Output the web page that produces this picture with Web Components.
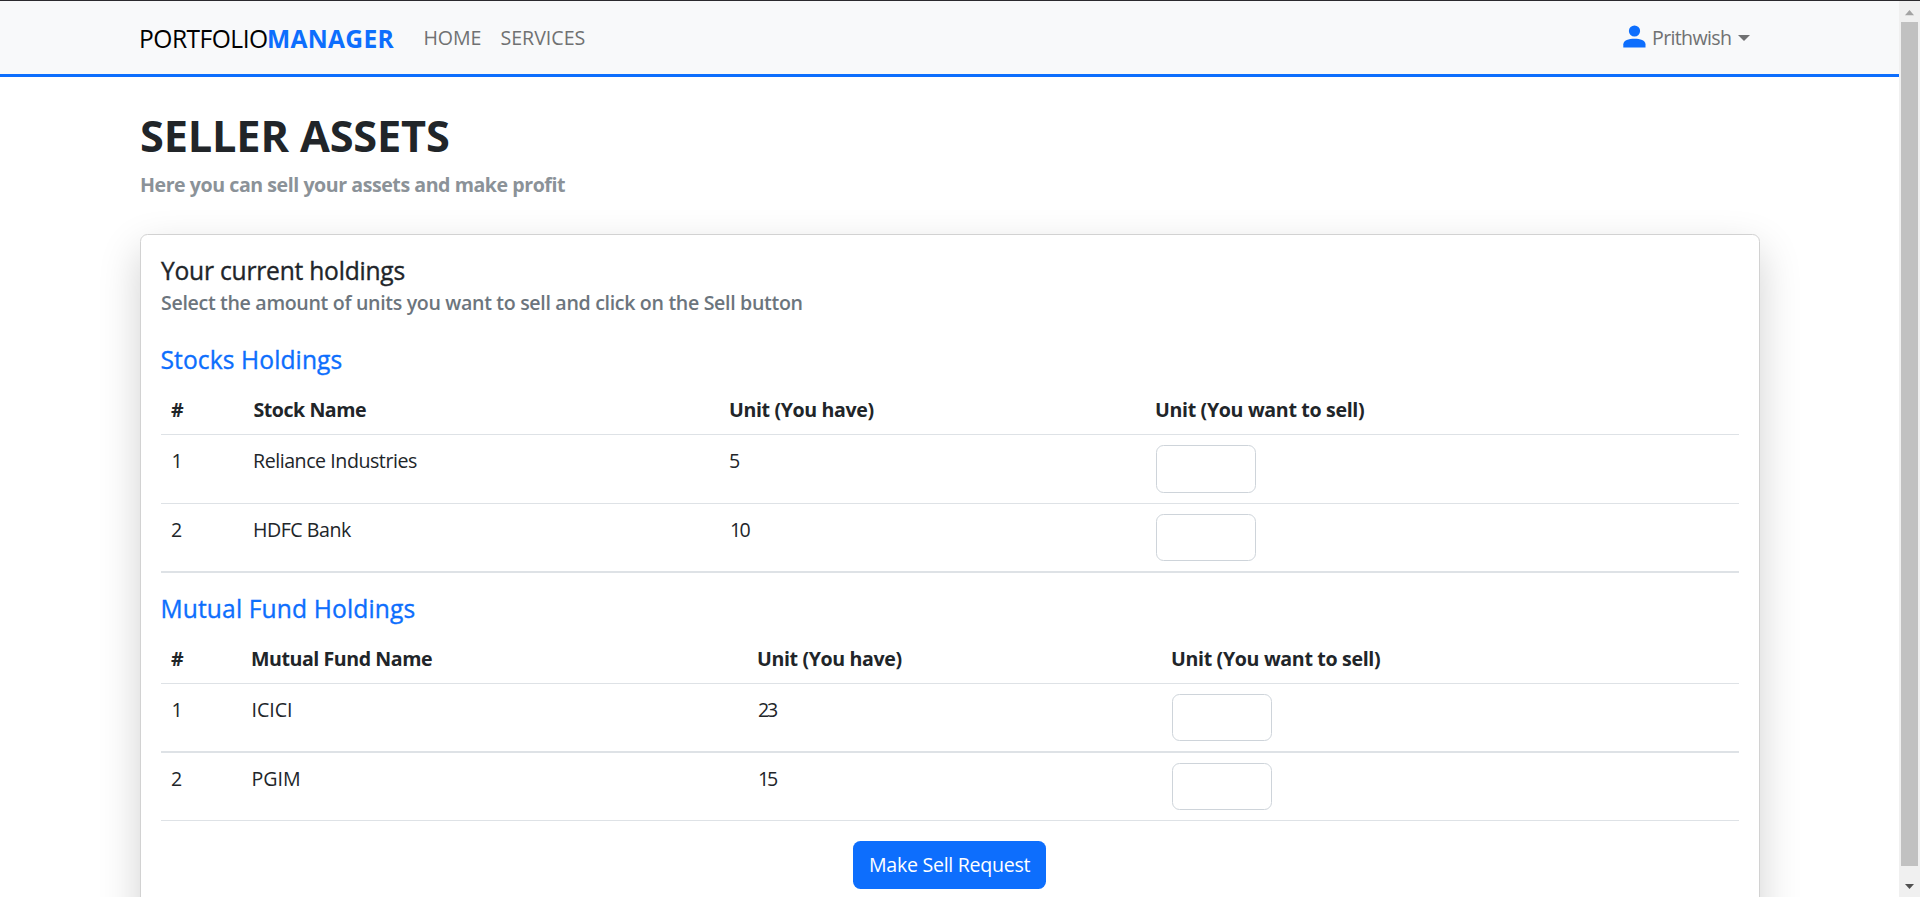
<!DOCTYPE html>
<html lang="en">
<head>
<meta charset="utf-8">
<title>Portfolio Manager</title>
<style>
html,body{margin:0;height:100%;overflow:hidden;background:#fff}
body{font-family:"Open Sans","Noto Sans",sans-serif;font-size:19.6px;line-height:30px;color:#212529}
</style>
</head>
<body>
<app-shell>
  <nav-bar slot="nav"></nav-bar>
  <page-heading><fit-text w="308">SELLER ASSETS</fit-text><fit-text slot="sub" w="424">Here you can sell your assets and make profit</fit-text></page-heading>
  <holdings-card></holdings-card>
</app-shell>
<script>
const define = (name, html, init) => {
  const t = document.createElement('template');
  t.innerHTML = html;
  customElements.define(name, class extends HTMLElement {
    constructor() {
      super();
      this.attachShadow({mode: 'open'}).append(t.content.cloneNode(true));
    }
    connectedCallback() { if (init) init(this, this.shadowRoot); }
  });
};

define('scroll-rail', `<style>
  :host{display:flex;flex-direction:column;align-items:center;width:21px;background:#f0f0f0;box-sizing:border-box}
  svg{display:block;width:21px;flex:none}
  i{display:block;width:17px;height:844px;background:#c1c1c1}
</style>
<svg height="21" viewBox="0 0 21 21"><path d="M6 14.2h9L10.5 9z" fill="#a3a3a3"/></svg>
<i></i>
<svg height="31" viewBox="0 0 21 31"><path d="M6 18h9l-4.500 5z" fill="#505050"/></svg>`);

define('app-shell', `<style>
  :host{display:grid;grid-template-columns:1fr 21px;height:897px;box-sizing:border-box;border-top:1px solid #2b2a2e;overflow:hidden}
  .view{overflow:hidden;min-width:0}
  main{padding:0 139px 0 140px}
</style>
<div class="view"><slot name="nav"></slot><main><slot></slot></main></div>
<scroll-rail></scroll-rail>`);

define('user-icon', `<style>:host{display:block;width:23px;height:23px}svg{display:block}</style>
<svg width="23" height="23" viewBox="0 0 23 23" fill="#0d6efd"><circle cx="11.500" cy="6" r="5.600"/><path d="M.3 22.600v-3.400c0-3.600 5.500-5.400 11.200-5.400s11 1.800 11 5.400v3.400z"/></svg>`);

define('nav-bar', `<style>
  :host{display:flex;box-sizing:border-box;height:76px;padding:0 149px 0 141px;background:#f8f9fa;border-bottom:3px solid #0d6efd;color:#707172}
  .brand{display:flex;gap:2px;font-size:24.6px;line-height:36px;padding-top:19.500px;color:#000}
  b{color:#0d6efd;font-weight:700}
  .links{display:flex;gap:21px;margin-left:30px;padding-top:21.500px}
  .user{display:flex;margin-left:auto;padding-top:21.500px}
  user-icon{margin:2.500px 7px 0 0}
  .caret{width:0;height:0;margin:12px 0 0 7px;border:6px solid transparent;border-top-color:#707172;border-bottom:0}
</style>
<div class="brand"><fit-text w="126">PORTFOLIO</fit-text><b><fit-text w="125.500">MANAGER</fit-text></b></div>
<div class="links"><fit-text w="56">HOME</fit-text><fit-text w="83">SERVICES</fit-text></div>
<div class="user"><user-icon></user-icon><fit-text w="78">Prithwish</fit-text><span class="caret"></span></div>`);

define('page-heading', `<style>
  :host{display:block;height:157px;padding:0 0 0 1px;box-sizing:border-box}
  h1{margin:0;padding-top:33px;font-size:43.300px;line-height:52px;font-weight:700;height:52px}
  p{margin:0;padding-top:8px;font-weight:700;color:#8b9298}
</style><h1><slot></slot></h1><p><slot name="sub"></slot></p>`);

define('unit-input', `<style>
  :host{display:block}
  input{display:block;box-sizing:border-box;width:100px;height:var(--h,47px);margin:0;padding:7px 15px;border:1px solid #ced4da;border-radius:7.500px;background:#fff;font:inherit;outline:0}
</style><input type="text" aria-label="Units to sell">`);

define('holdings-table', `<style>
  :host{display:block}
  .row{display:grid;grid-template-columns:var(--cols);padding-left:10px;box-sizing:border-box;border-bottom:1px solid #dee2e6}
  .head{height:49px;font-weight:700;padding-top:9px}
  .c{padding-top:11px}
  unit-input{padding-top:10px}
</style>`, (el, root) => {
  const d = JSON.parse(el.getAttribute('data'));
  el.style.setProperty('--cols', d.cols);
  const cell = ([t, w, dx]) => `<div class="c" style="padding-left:${dx || 0}px"><fit-text w="${w}">${t}</fit-text></div>`;
  const head = `<div class="row head">${d.head.map(([t, w]) => `<div><fit-text w="${w}">${t}</fit-text></div>`).join('')}</div>`;
  const rows = d.rows.map(r => `<div class="row" style="height:${r.h}px;border-bottom-width:${r.b}px;--h:${r.i}px">${r.c.map(cell).join('')}<unit-input></unit-input></div>`).join('');
  root.innerHTML += head + rows;
});

define('sell-button', `<style>
  :host{display:block;width:193px}
  button{display:block;width:193px;height:48px;border:0;border-radius:7.500px;background:#0d6efd;color:#fff;font:inherit;padding:0 0 0 17px;text-align:left}
</style><button type="button"><fit-text w="160.5">Make Sell Request</fit-text></button>`);

define('holdings-card', `<style>
  :host{display:block;box-sizing:border-box;width:1620px;height:760px;border:1px solid #d2d2d2;border-radius:7.500px;background:#fff;padding:0 20px;box-shadow:0 16px 42px rgba(0,0,0,.185)}
  h5{margin:0;font-size:24.6px;line-height:30px;font-weight:500;height:30px;-webkit-text-stroke:.35px currentColor}
  h6{margin:0;font-size:19.600px;line-height:24px;font-weight:600;height:24px;color:#6c757d;padding-top:5px}
  .t{color:#0d6efd}
  .b{padding-left:.5px}
  sell-button{margin:20px 0 0 692px}
</style>
<h5 style="padding-top:21px"><fit-text w="243.5">Your current holdings</fit-text></h5>
<h6><fit-text w="640.500">Select the amount of units you want to sell and click on the Sell button</fit-text></h6>
<h5 class="t b" style="padding-top:30px"><fit-text w="180">Stocks Holdings</fit-text></h5>
<holdings-table style="padding-top:11px" data='{"cols":"82.500px 476.500px 426px 1fr","head":[["#",11],["Stock Name",112.5],["Unit (You have)",143.5],["Unit (You want to sell)",208]],"rows":[{"h":69,"b":1,"i":48,"c":[["1",8,1.5],["Reliance Industries",163,0.5],["5",9]]},{"h":69,"b":2,"i":47,"c":[["2",10],["HDFC Bank",98,0.5],["10",19.5,1]]}]}'></holdings-table>
<h5 class="t" style="padding:21px 0 0 1.500px"><fit-text w="252">Mutual Fund Holdings</fit-text></h5>
<holdings-table style="padding-top:11px" data='{"cols":"81px 506px 414px 1fr","head":[["#",11],["Mutual Fund Name",180],["Unit (You have)",143.5],["Unit (You want to sell)",208]],"rows":[{"h":69,"b":2,"i":47,"c":[["1",8,1.5],["ICICI",38.5,0.5],["23",20]]},{"h":68,"b":1,"i":47,"c":[["2",10],["PGIM",46.5,0.5],["15",19,1]]}]}'></holdings-table>
<sell-button></sell-button>`);

/* One line of text whose tracking is set so that its ink spans `w` pixels.
   Registered last, so that every parent's font is known when it measures. */
const ctx = document.createElement('canvas').getContext('2d');
define('fit-text', `<style>
  :host{display:inline-block;white-space:nowrap}
  span{display:inline-block}
</style><span><slot></slot></span>`, (el, root) => {
  const s = getComputedStyle(el), text = el.textContent, w = +el.getAttribute('w');
  ctx.font = `${s.fontWeight} ${s.fontSize} ${s.fontFamily}`;
  const m = ctx.measureText(text);
  const ink = m.actualBoundingBoxLeft + m.actualBoundingBoxRight;
  const gap = text.length > 1 ? (w - ink) / (text.length - 1) : 0;
  el.style.width = w + 'px';
  const span = root.querySelector('span');
  span.style.letterSpacing = gap.toFixed(3) + 'px';
  span.style.marginLeft = m.actualBoundingBoxLeft.toFixed(2) + 'px';
});
</script>
</body>
</html>
